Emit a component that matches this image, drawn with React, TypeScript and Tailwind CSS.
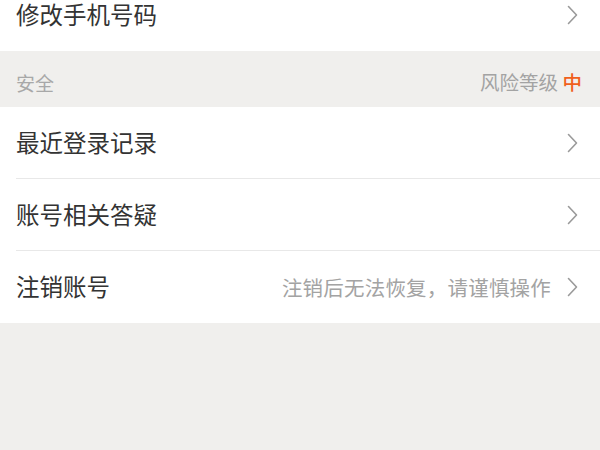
import React from "react";

const font = { fontFamily: '"Noto Sans CJK SC", "Noto Sans", sans-serif' };

function Chevron() {
  return (
    <svg className="w-[11px] h-[20px] shrink-0" viewBox="0 0 11 20" fill="none">
      <polyline points="1.5,1.5 9.5,10 1.5,18.5" stroke="#9a9a9a" strokeWidth={1.6} strokeLinecap="round" strokeLinejoin="round" />
    </svg>
  );
}

function Row({ label, hint, divider, className = "" }: { label: string; hint?: string; divider?: boolean; className?: string }) {
  return (
    <div className={`bg-white pl-[16px] ${className}`}>
      <div className={`h-[72px] flex items-center justify-between pr-[22px] ${divider ? "border-b border-[#e8e8e8]" : ""}`}>
        <span className="text-[23.5px] text-[#333333] leading-none">{label}</span>
        <div className="flex items-center gap-[16px]">
          {hint && <span className="text-[20.5px] text-[#a3a3a3] leading-none tracking-[0.2px]">{hint}</span>}
          <Chevron />
        </div>
      </div>
    </div>
  );
}

export default function App() {
  return (
    <div className="w-[600px] h-[450px] overflow-hidden bg-[#f0efed]" style={font}>
      <Row label="修改手机号码" className="-mt-[21px]" />
      {/* Section header */}
      <div className="h-[56px] flex items-center justify-between pl-[16px] pr-[18px] pt-[6px]">
        <span className="text-[19px] text-[#a8a8a8] leading-none">安全</span>
        <span className="text-[19.5px] text-[#a3a3a3] leading-none">
          风险等级 <span className="text-[#f0601c] font-medium">中</span>
        </span>
      </div>
      <Row label="最近登录记录" divider />
      <Row label="账号相关答疑" divider />
      <Row label="注销账号" hint="注销后无法恢复，请谨慎操作" />
    </div>
  );
}
